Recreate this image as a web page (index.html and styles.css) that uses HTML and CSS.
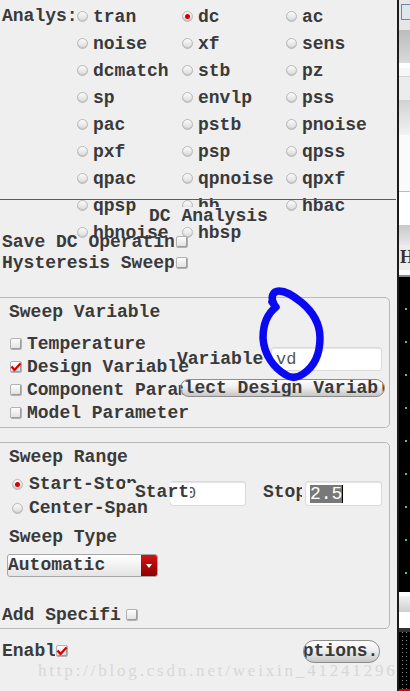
FILE: index.html
```html
<!DOCTYPE html>
<html>
<head>
<meta charset="utf-8">
<link rel="stylesheet" href="styles.css">
</head>
<body>
<div class="screen">
  <div class="panel">
    <div class="analysis">
      <div class="analysis-label">Analys:</div>
      <div class="radio-grid">
        <div class="opt"><span class="radio"></span>tran</div>
        <div class="opt"><span class="radio on"></span>dc</div>
        <div class="opt"><span class="radio"></span>ac</div>
        <div class="opt"><span class="radio"></span>noise</div>
        <div class="opt"><span class="radio"></span>xf</div>
        <div class="opt"><span class="radio"></span>sens</div>
        <div class="opt"><span class="radio"></span>dcmatch</div>
        <div class="opt"><span class="radio"></span>stb</div>
        <div class="opt"><span class="radio"></span>pz</div>
        <div class="opt"><span class="radio"></span>sp</div>
        <div class="opt"><span class="radio"></span>envlp</div>
        <div class="opt"><span class="radio"></span>pss</div>
        <div class="opt"><span class="radio"></span>pac</div>
        <div class="opt"><span class="radio"></span>pstb</div>
        <div class="opt"><span class="radio"></span>pnoise</div>
        <div class="opt"><span class="radio"></span>pxf</div>
        <div class="opt"><span class="radio"></span>psp</div>
        <div class="opt"><span class="radio"></span>qpss</div>
        <div class="opt"><span class="radio"></span>qpac</div>
        <div class="opt"><span class="radio"></span>qpnoise</div>
        <div class="opt"><span class="radio"></span>qpxf</div>
        <div class="opt"><span class="radio"></span>qpsp</div>
        <div class="opt"><span class="radio"></span>hb</div>
        <div class="opt"><span class="radio"></span>hbac</div>
        <div class="opt"><span class="radio"></span>hbnoise</div>
        <div class="opt"><span class="radio"></span>hbsp</div>
      </div>
    </div>

    <div class="dc-section">
      <div class="divider"></div>
      <div class="dc-title">DC Analysis</div>
      <div class="opt-row save"><span class="lbl">Save DC Operating Point</span><span class="check"></span></div>
      <div class="opt-row"><span class="lbl">Hysteresis Sweep</span><span class="check"></span></div>
    </div>

    <div class="group group-1">
      <div class="group-title">Sweep Variable</div>
      <div class="chk-list">
        <div class="chk-row"><span class="check"></span>Temperature</div>
        <div class="chk-row"><span class="check on"><svg viewBox="0 0 12 12" width="12" height="12"><path d="M1.5 5.5 L4.5 9 L10.5 2.5" fill="none" stroke="#d80000" stroke-width="2.4" stroke-linejoin="round"/></svg></span>Design Variable</div>
        <div class="chk-row"><span class="check"></span>Component Parameter</div>
        <div class="chk-row"><span class="check"></span>Model Parameter</div>
      </div>
      <div class="var-controls">
        <div class="var-line">
          <span class="var-label">Variable</span>
          <div class="text-input var-input">vd</div>
        </div>
        <div class="pill-btn select-btn"><span>Select Design Variable</span></div>
      </div>
    </div>

    <div class="group group-2">
      <div class="group-title">Sweep Range</div>
      <div class="radio-rows">
        <div class="radio-row"><span class="radio on"></span>Start-Stop</div>
        <div class="radio-row"><span class="radio"></span>Center-Span</div>
      </div>
      <div class="group-title type-title">Sweep Type</div>
      <div class="select">
        <span class="select-text">Automatic</span>
        <span class="select-arrow"><span class="tri"></span></span>
      </div>
      <div class="opt-row add-row"><span class="lbl add-lbl">Add Specific Points</span><span class="check"></span></div>

      <div class="text-input start-input">0</div>
      <div class="range-label start-label">Start</div>
      <div class="range-label stop-label">Stop</div>
      <div class="text-input stop-input"><span class="sel">2.5</span><span class="caret"></span></div>
    </div>

    <div class="enable-row">
      <span class="lbl enable-lbl">Enabled</span>
      <span class="check on"><svg viewBox="0 0 12 12" width="12" height="12"><path d="M1.5 5.5 L4.5 9 L10.5 2.5" fill="none" stroke="#d80000" stroke-width="2.4" stroke-linejoin="round"/></svg></span>
      <div class="pill-btn options-btn"><span>Options...</span></div>
    </div>

    <div class="watermark">http://blog.csdn.net/weixin_41241296</div>

    <svg class="scribble" width="75" height="105" viewBox="0 0 75 105">
      <path d="M19 21 C15 14 18 8 24 8 C31 8 37 12 46 19 C57 28 65 40 65 55 C65 71 60 83 48 91 C42 95 37 96 31 92 C19 85 9 72 8 55 C8 41 12 31 21 24 L17 19" fill="none" stroke="#0a0af2" stroke-width="7.5" stroke-linecap="round" stroke-linejoin="round"/>
    </svg>
  </div>

  <div class="side">
    <div class="s s1"><div class="side-icon"></div></div>
    <div class="s s2"></div>
    <div class="s s3"></div>
    <div class="s s4"></div>
    <div class="s s5"></div>
    <div class="s s6"></div>
    <div class="s s7"></div>
    <div class="s s8"></div>
    <div class="s s9"></div>
    <div class="s s10">H</div>
    <div class="s s11"></div>
    <div class="s s12"></div>
    <div class="s s13"></div>
    <div class="s s14"></div>
    <div class="s s15"></div>
    <div class="s s16"></div>
    <div class="s s17"></div>
  </div>
</div>
</body>
</html>
```

FILE: styles.css
```css
* { box-sizing: border-box; }
html, body { margin: 0; padding: 0; height: 100%; overflow: hidden; }
body {
  background: #efefef;
  font-family: "Liberation Mono", "DejaVu Sans Mono", monospace;
  font-weight: bold;
  font-size: 18px;
  color: #3a3a3a;
}
.screen { display: flex; width: 410px; height: 691px; }
.panel {
  position: relative;
  width: 399px;
  flex: none;
  border-right: 2px solid #1c1c1c;
  overflow: hidden;
}

/* analysis radios */
.analysis { display: flex; padding-top: 3px; }
.analysis-label { width: 77px; padding-left: 2px; line-height: 27px; white-space: nowrap; flex: none; }
.radio-grid { display: grid; grid-template-columns: 105px 104px 104px; grid-auto-rows: 27px; }
.opt { display: flex; align-items: center; gap: 5px; white-space: nowrap; }
.radio {
  width: 11px; height: 11px; flex: none;
  border-radius: 50%;
  border: 1px solid #b8b8b8;
  background: linear-gradient(#fbfbfb, #dadada);
  box-shadow: inset 0 -1px 0 #c4c4c4;
  position: relative;
}
.radio.on::after {
  content: ""; position: absolute; left: 2px; top: 2px;
  width: 5px; height: 5px; border-radius: 50%;
  background: #d40000;
}

/* DC analysis overlay section */
.dc-section { position: relative; margin-top: -47px; }
.divider { border-top: 1px solid #5c5c5c; width: 396px; }
.dc-title {
  margin: 7px 0 0 149px; width: 121px; height: 18px; line-height: 18px;
  background: #efefef; white-space: nowrap;
}
.opt-row { display: flex; align-items: center; height: 21px; gap: 2px; }
.save { margin-top: 6px; }
.lbl { overflow: hidden; white-space: nowrap; flex: none; }
.opt-row .lbl { width: 174px; padding-left: 2px; }

.check {
  width: 12px; height: 12px; flex: none;
  border: 1px solid #b2b2b2; border-radius: 2px;
  background: linear-gradient(#fdfdfd, #e0e0e0);
  box-shadow: inset -1px -1px 0 #9c9c9c;
  position: relative;
}
.check svg { position: absolute; left: -1px; top: -1px; }

/* group boxes */
.group {
  position: relative;
  margin-left: -5px;
  width: 395px;
  border: 1px solid #b9b9b9;
  border-radius: 5px;
  padding: 4px 0 3px 13px;
}
.group-1 { margin-top: 24px; }
.group-2 { margin-top: 14px; }
.group-title { height: 20px; line-height: 20px; white-space: nowrap; }
.chk-list { margin-top: 10px; }
.chk-row { display: flex; align-items: center; gap: 5px; height: 23px; margin-left: 1px; white-space: nowrap; }

.var-controls { position: absolute; left: 181px; top: 49px; }
.var-line { display: flex; align-items: center; }
.var-label { width: 94px; line-height: 20px; }
.text-input {
  background: #fff;
  border: 1px solid #dadada;
  border-radius: 3px;
  box-shadow: inset 0 1px 1px #e4e4e4;
  font-weight: normal;
  font-size: 17px;
  color: #555;
  display: flex; align-items: center;
  white-space: nowrap; overflow: hidden;
}
.var-input { width: 111px; height: 24px; padding-left: 4px; }

.pill-btn {
  border: 1px solid #8c8c8c;
  background: linear-gradient(#ffffff, #eeeeee 45%, #c6c6c6);
  overflow: hidden; white-space: nowrap;
}
.pill-btn span { display: inline-block; }
.select-btn {
  margin: 8px 0 0 3px; width: 205px; height: 18px; border-radius: 9px; line-height: 16px;
}
.select-btn span { margin-left: -19px; }

.radio-rows { margin-top: 5px; }
.radio-row { display: flex; align-items: center; gap: 6px; height: 24px; margin-left: 3px; white-space: nowrap; }
.type-title { margin-top: 7px; }
.select {
  display: flex; margin: 7px 0 0 -2px;
  width: 151px; height: 23px;
  border: 1px solid #a6a6a6; border-radius: 3px;
  background: linear-gradient(#ffffff, #e4e4e4);
  overflow: hidden;
}
.select-text { flex: 1; line-height: 21px; }
.select-arrow {
  width: 16px; flex: none;
  background: linear-gradient(#d41414, #8c0000);
  display: flex; align-items: center; justify-content: center;
}
.tri { width: 0; height: 0; border-left: 3px solid transparent; border-right: 3px solid transparent; border-top: 4px solid #fff; }
.add-row { margin: 27px 0 0 -7px; gap: 5px; }
.add-row .add-lbl { width: 119px; padding-left: 0; }

.start-input { position: absolute; left: 174px; top: 38px; width: 76px; height: 25px; padding-left: 15px; }
.stop-input { position: absolute; left: 309px; top: 38px; width: 77px; height: 25px; padding-left: 4px; }
.range-label { position: absolute; top: 40px; height: 19px; line-height: 19px; white-space: nowrap; overflow: hidden; }
.start-label {
  left: 129px; width: 65px; padding-left: 10px;
  background: linear-gradient(to right, #efefef 45px, #ffffff 45px);
}
.stop-label { left: 267px; width: 39px; }
.sel { background: #787878; color: #fff; font-size: 18px; line-height: 18px; height: 18px; }
.caret { width: 1px; height: 18px; background: #000; }

.enable-row { display: flex; align-items: center; height: 24px; margin-top: 10px; gap: 1px; }
.enable-lbl { width: 55px; padding-left: 2px; }
.options-btn {
  margin-left: auto; margin-right: 17px;
  width: 77px; height: 23px; border-radius: 11px; line-height: 21px;
}
.options-btn span { margin-left: -12px; }

.watermark {
  position: absolute; left: 38px; top: 661px;
  font-family: "Liberation Serif", "DejaVu Serif", serif;
  font-weight: normal; font-size: 17px; line-height: 20px;
  letter-spacing: 2.8px;
  color: #d7d7d7; white-space: nowrap;
}
.scribble { position: absolute; left: 255px; top: 283px; }

/* right strip: neighbouring window */
.side { flex: 1; display: flex; flex-direction: column; overflow: hidden; }
.s { flex: none; }
.s1 { height: 30px; background: #e6e6e6; padding: 4px 0 0 2px; }
.side-icon { width: 10px; height: 16px; border: 1px solid #6b86a8; background: #dde5ee; }
.s2 { height: 33px; background: linear-gradient(#bcbcbc, #dadada); }
.s3 { height: 5px; background: #fff; }
.s4 { height: 9px; background: #f6f6f6; border-bottom: 1px solid #d4d4d4; }
.s5 { height: 23px; background: #ececec; }
.s6 { height: 35px; background: linear-gradient(#d2d2d2, #f2f2f2); }
.s7 { height: 57px; background: #fafafa; border-bottom: 1px solid #bcbcbc; }
.s8 { height: 33px; background: #fff; }
.s9 { height: 20px; background: linear-gradient(#c8c8c8, #e8e8e8); }
.s10 { height: 25px; background: #ececec; line-height: 25px; font-family: "Liberation Serif", serif; font-size: 18px; color: #333; padding-left: 1px; }
.s11 { height: 7px; background: #fff; border-bottom: 2px solid #8a8a8a; }
.s12 {
  height: 315px;
  background: radial-gradient(circle at 7px 16px, #35e035 0 1px, transparent 1.5px) 0 16px / 11px 33px repeat, #000;
}
.s13 { height: 4px; background: #fff; }
.s14 { height: 16px; background: linear-gradient(#f2f2f2, #cfcfcf); }
.s15 { height: 16px; background: #fff; }
.s16 { height: 4px; background: #333; }
.s17 {
  height: 59px;
  background:
    linear-gradient(#d00000, #d00000) 0 100% / 100% 2px no-repeat,
    repeating-linear-gradient(#8a8a8a 0 1px, transparent 1px 4px) 3px 0 / 1px 100% no-repeat,
    repeating-linear-gradient(#8a8a8a 0 1px, transparent 1px 4px) 7px 0 / 1px 100% no-repeat,
    #000;
}
```
